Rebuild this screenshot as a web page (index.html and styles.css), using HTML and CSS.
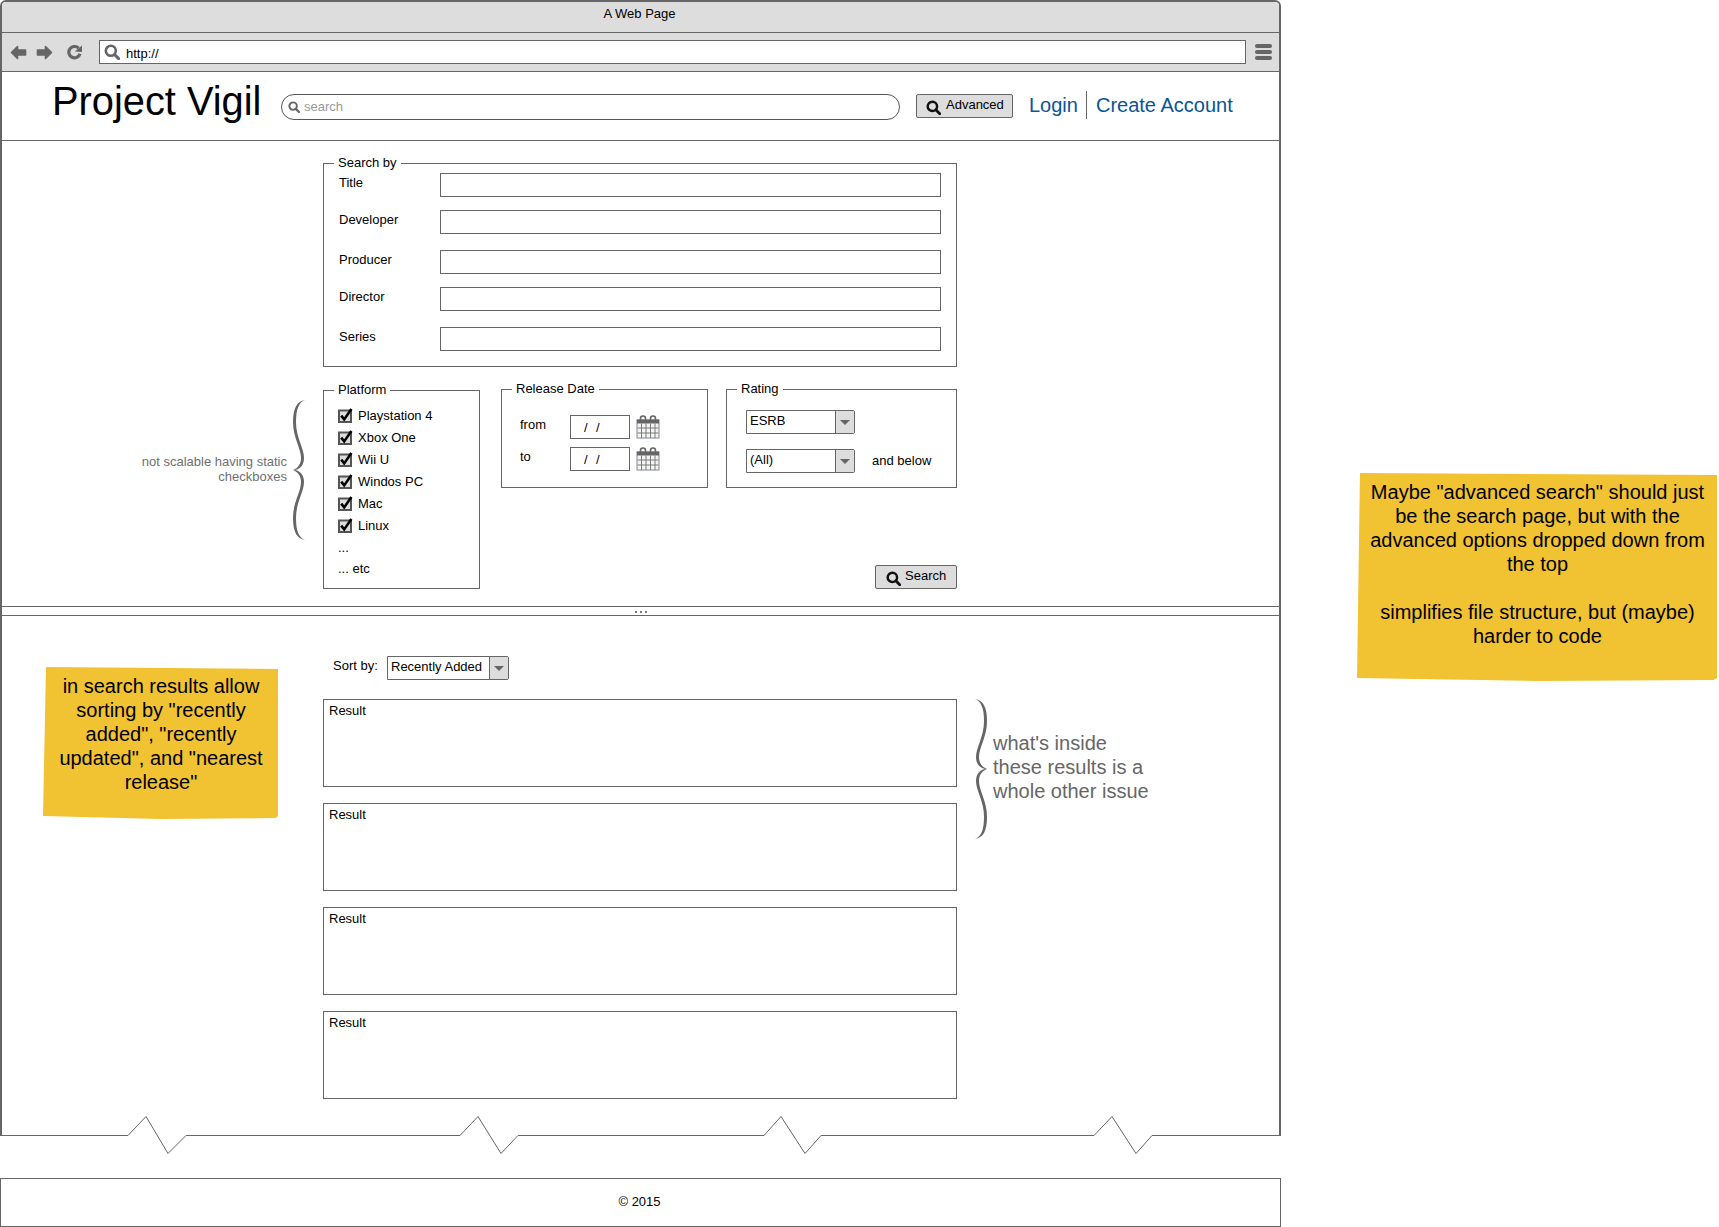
FILE: index.html
```html
<!DOCTYPE html>
<html lang="en">
<head>
    <meta charset="UTF-8">
    <meta name="viewport" content="width=device-width, initial-scale=1.0">
    <title>Project Vigil - Advanced Search</title>
    <link rel="stylesheet" href="styles.css">
</head>
<body>
    <svg class="icon-defs" width="0" height="0">
        <symbol id="icon-search" viewBox="0 0 16 16">
            <circle cx="6.8" cy="6.8" r="5" fill="none" stroke="currentColor" stroke-width="2.6"/>
            <path d="M10.5 10.5 L14.6 14.6" fill="none" stroke="currentColor" stroke-width="3" stroke-linecap="round"/>
        </symbol>
        <symbol id="icon-calendar" viewBox="0 0 24 24">
            <rect x="1" y="5" width="22" height="18" fill="#f4f4f4" stroke="#7f8794" stroke-width="1"/>
            <path d="M1 4.5 H23 V8.5 H1 Z" fill="#666"/>
            <path d="M4.5 6 V3.5 A2.5 2.5 0 0 1 9.5 3.5 V6 M14.5 6 V3.5 A2.5 2.5 0 0 1 19.5 3.5 V6" fill="none" stroke="#666" stroke-width="1.6"/>
            <path d="M1.5 13 H22.5 M1.5 18 H22.5 M5.5 8.5 V23 M10 8.5 V23 M14.5 8.5 V23 M19 8.5 V23" stroke="#7a7a7a" stroke-width="1"/>
        </symbol>
        <symbol id="icon-check" viewBox="0 0 15 15">
            <rect x="1" y="2.5" width="12" height="11.5" fill="#ddd" stroke="#555" stroke-width="2"/>
            <path d="M3.2 7.6 L6.2 11.4 L13.4 1" fill="none" stroke="#000" stroke-width="2.6"/>
        </symbol>
        <symbol id="icon-brace" viewBox="0 0 14 140">
            <path d="M13 0 C5 1 1 8 1 22 C1 38 9 48 9 58 C9 64 6 68 1 70 C6 72 9 76 9 82 C9 92 1 102 1 118 C1 132 5 139 13 140 C7 138 4 131 4 118 C4 102 12 92 12 82 C12 76 9 71 3 70 C9 69 12 64 12 58 C12 48 4 38 4 22 C4 9 7 2 13 0 Z" fill="#666"/>
        </symbol>
    </svg>

    <div class="stage">
        <div class="browser">
            <div class="titlebar">A Web Page</div>

            <div class="toolbar">
                <svg class="nav-icon" viewBox="0 0 17 15"><path d="M7.5 1.5 L1.5 7.5 L7.5 13.5 V10 H15.5 V5 H7.5 Z" fill="#666" stroke="#666" stroke-width="1.6" stroke-linejoin="round"/></svg>
                <svg class="nav-icon nav-forward" viewBox="0 0 17 15"><path d="M9.5 1.5 L15.5 7.5 L9.5 13.5 V10 H1.5 V5 H9.5 Z" fill="#666" stroke="#666" stroke-width="1.6" stroke-linejoin="round"/></svg>
                <svg class="nav-icon nav-reload" viewBox="0 0 17 15"><path d="M12.6 3.2 A5.7 5.7 0 1 0 14 8.8" fill="none" stroke="#666" stroke-width="3.2"/><path d="M8.8 6.6 L16 7 V0.4 Z" fill="#666"/></svg>
                <div class="url-bar">
                    <svg class="url-icon"><use href="#icon-search"/></svg>
                    <span>http://</span>
                </div>
                <div class="menu-icon"><i></i><i></i><i></i></div>
            </div>

            <header class="site-header">
                <h1 class="logo">Project Vigil</h1>
                <div class="site-search">
                    <svg class="site-search-icon"><use href="#icon-search"/></svg>
                    <span>search</span>
                </div>
                <button class="btn btn-advanced"><svg class="btn-icon"><use href="#icon-search"/></svg><span>Advanced</span></button>
                <nav class="account-links">
                    <a href="#">Login</a>
                    <a href="#">Create Account</a>
                </nav>
            </header>

            <section class="search-panel">
                <fieldset class="group search-by">
                    <legend>Search by</legend>
                    <div class="form-row"><label>Title</label><input type="text"></div>
                    <div class="form-row"><label>Developer</label><input type="text"></div>
                    <div class="form-row"><label>Producer</label><input type="text"></div>
                    <div class="form-row"><label>Director</label><input type="text"></div>
                    <div class="form-row"><label>Series</label><input type="text"></div>
                </fieldset>

                <div class="filters">
                    <fieldset class="group platform">
                        <legend>Platform</legend>
                        <div class="check-row"><svg class="check"><use href="#icon-check"/></svg>Playstation 4</div>
                        <div class="check-row"><svg class="check"><use href="#icon-check"/></svg>Xbox One</div>
                        <div class="check-row"><svg class="check"><use href="#icon-check"/></svg>Wii U</div>
                        <div class="check-row"><svg class="check"><use href="#icon-check"/></svg>Windos PC</div>
                        <div class="check-row"><svg class="check"><use href="#icon-check"/></svg>Mac</div>
                        <div class="check-row"><svg class="check"><use href="#icon-check"/></svg>Linux</div>
                        <div class="more-row">...</div>
                        <div class="more-row">... etc</div>
                    </fieldset>

                    <div class="filters-side">
                        <div class="filters-top">
                            <fieldset class="group release-date">
                                <legend>Release Date</legend>
                                <div class="date-row">
                                    <label>from</label>
                                    <input class="date-input" type="text" value="/  /">
                                    <svg class="calendar"><use href="#icon-calendar"/></svg>
                                </div>
                                <div class="date-row">
                                    <label>to</label>
                                    <input class="date-input" type="text" value="/  /">
                                    <svg class="calendar"><use href="#icon-calendar"/></svg>
                                </div>
                            </fieldset>

                            <fieldset class="group rating">
                                <legend>Rating</legend>
                                <div class="rating-row">
                                    <div class="select rating-select"><span>ESRB</span><b class="select-arrow"></b></div>
                                </div>
                                <div class="rating-row">
                                    <div class="select rating-select"><span>(All)</span><b class="select-arrow"></b></div>
                                    <span class="rating-below">and below</span>
                                </div>
                            </fieldset>
                        </div>
                        <button class="btn btn-search"><svg class="btn-icon"><use href="#icon-search"/></svg><span>Search</span></button>
                    </div>
                </div>
            </section>

            <div class="splitter"><i></i><i></i><i></i></div>

            <section class="results-panel">
                <div class="sort-row">
                    <label>Sort by:</label>
                    <div class="select sort-select"><span>Recently Added</span><b class="select-arrow"></b></div>
                </div>
                <div class="result">Result</div>
                <div class="result">Result</div>
                <div class="result">Result</div>
                <div class="result">Result</div>
            </section>

            <!-- torn bottom edge of the window -->
            <svg class="torn-edge" viewBox="0 0 1281 40">
                <path d="M0 20.5 H128 L146 1.5 L168 38.5 L186 20.5 H460 L478 1.5 L501 38.5 L518 20.5 H764 L781 1.5 L805 38.5 L821 20.5 H1094 L1112 1.5 L1136 38.5 L1152 20.5 H1281" fill="none" stroke="#666"/>
            </svg>
        </div>

        <footer class="page-footer">© 2015</footer>

        <!-- annotations on the mockup -->
        <div class="remark remark-checkboxes">not scalable having static<br>checkboxes</div>
        <svg class="brace brace-left"><use href="#icon-brace"/></svg>
        <svg class="brace brace-right"><use href="#icon-brace"/></svg>
        <div class="remark remark-results">what's inside<br>these results is a<br>whole other issue</div>

        <div class="sticky sticky-sort">in search results allow sorting by "recently added", "recently updated", and "nearest release"</div>
        <div class="sticky sticky-advanced">Maybe "advanced search" should just be the search page, but with the advanced options dropped down from the top<br><br>simplifies file structure, but (maybe) harder to code</div>
    </div>
</body>
</html>
```

FILE: styles.css
```css
* {
    box-sizing: border-box;
}
html, body {
    margin: 0;
    padding: 0;
    background: #fff;
}
body {
    font-family: "Liberation Sans", Arial, sans-serif;
    font-size: 13px;
    color: #000;
}
.icon-defs {
    position: absolute;
}
.stage {
    position: relative;
    width: 1719px;
    height: 1227px;
    overflow: hidden;
}

/* browser window */
.browser {
    position: relative;
    width: 1281px;
    height: 1136px;
    border: 2px solid #666;
    border-bottom: none;
    border-radius: 6px 6px 0 0;
}
.titlebar {
    height: 31px;
    padding-top: 4px;
    padding-right: 2px;
    background: #ddd;
    border-bottom: 1px solid #666;
    border-radius: 4px 4px 0 0;
    text-align: center;
    line-height: 15px;
}
.toolbar {
    display: flex;
    align-items: center;
    height: 39px;
    padding: 0 7px 0 8px;
    background: #ddd;
    border-bottom: 1px solid #666;
}
.nav-icon {
    flex: none;
    width: 17px;
    height: 15px;
}
.nav-forward {
    margin-left: 9px;
}
.nav-reload {
    margin-left: 13px;
}
.url-bar {
    flex: 1;
    display: flex;
    align-items: center;
    height: 24px;
    margin: 0 9px 0 16px;
    padding-left: 4px;
    background: #fff;
    border: 1px solid #666;
    line-height: 15px;
}
.url-bar span {
    margin-top: 2px;
}
.url-icon {
    width: 16px;
    height: 16px;
    margin-right: 6px;
    color: #666;
}
.menu-icon {
    display: flex;
    flex-direction: column;
    gap: 2px;
    width: 17px;
}
.menu-icon i {
    height: 4px;
    background: #666;
    border-radius: 2px;
}

/* site header */
.site-header {
    display: flex;
    align-items: center;
    height: 69px;
    padding-left: 50px;
    border-bottom: 1px solid #666;
}
.logo {
    width: 229px;
    margin: -10px 0 0;
    font-size: 39.8px;
    font-weight: normal;
    line-height: 46px;
    white-space: nowrap;
}
.site-search {
    display: flex;
    align-items: center;
    width: 619px;
    height: 26px;
    margin-top: 2px;
    padding: 0 0 1px 6px;
    color: #999;
    border: 1px solid #555;
    border-radius: 13px;
}
.site-search-icon {
    width: 12px;
    height: 12px;
    margin-right: 4px;
    color: #666;
}
.btn {
    display: flex;
    align-items: flex-start;
    padding: 0;
    font-family: inherit;
    font-size: 13px;
    color: #000;
    background: #ddd;
    border: 1px solid #666;
    border-radius: 2px;
}
.btn-icon {
    width: 15px;
    height: 15px;
    margin-top: 5px;
    color: #111;
}
.btn-advanced {
    width: 97px;
    height: 24px;
    margin-left: 16px;
    padding-left: 9px;
}
.btn-advanced span {
    margin: 2px 0 0 5px;
}
.account-links {
    display: flex;
    align-items: center;
    height: 28px;
    margin: -2px 0 0 16px;
}
.account-links a {
    font-size: 20px;
    line-height: 28px;
    color: #0a5596;
    text-decoration: none;
}
.account-links a + a {
    margin-left: 8px;
    padding-left: 9px;
    border-left: 1px solid #666;
}

/* search form */
.search-panel {
    height: 465px;
    padding: 14px 0 0 321px;
}
.group {
    min-width: 0;
    margin: 0;
    padding: 0 0 0 10px;
    border: 1px solid #666;
}
.group legend {
    padding: 0 4px 2px;
    line-height: 15px;
}
.search-by {
    width: 634px;
    padding-top: 1px;
    padding-bottom: 15px;
}
.form-row {
    display: flex;
    align-items: center;
    height: 24px;
    margin-left: 5px;
}
.form-row:nth-child(3) { margin-top: 13px; }
.form-row:nth-child(4) { margin-top: 16px; }
.form-row:nth-child(5) { margin-top: 13px; }
.form-row:nth-child(6) { margin-top: 16px; }
.form-row label {
    width: 101px;
    padding-bottom: 5px;
}
.form-row input {
    width: 501px;
    height: 24px;
    border: 1px solid #666;
    background: #fff;
}
.filters {
    display: flex;
    margin-top: 14px;
}
.platform {
    flex: none;
    width: 157px;
    height: 207px;
    margin-top: 1px;
    padding-top: 5px;
}
.check-row {
    display: flex;
    align-items: center;
    height: 22px;
    margin-left: 4px;
    line-height: 15px;
}
.check {
    width: 15px;
    height: 15px;
    margin-right: 5px;
    margin-top: 1px;
}
.more-row {
    height: 21px;
    margin-left: 4px;
    line-height: 15px;
}
.check-row + .more-row {
    margin-top: 4px;
}
.filters-side {
    display: flex;
    flex-direction: column;
    align-items: flex-end;
    width: 456px;
    margin-left: 21px;
}
.filters-top {
    display: flex;
    justify-content: space-between;
    width: 100%;
}
.release-date {
    width: 207px;
    height: 107px;
    padding-top: 17px;
}
.date-row {
    display: flex;
    align-items: center;
    height: 24px;
    margin-left: 8px;
}
.date-row + .date-row {
    margin-top: 8px;
}
.date-row label {
    width: 50px;
    padding-bottom: 6px;
}
.date-input {
    width: 60px;
    height: 24px;
    padding: 0 0 0 13px;
    font-family: inherit;
    font-size: 13px;
    letter-spacing: 0.4px;
    border: 1px solid #666;
}
.calendar {
    width: 24px;
    height: 24px;
    margin-left: 6px;
}
.rating {
    width: 231px;
    height: 107px;
    padding-top: 12px;
}
.rating-row {
    display: flex;
    align-items: center;
    margin-left: 9px;
}
.rating-row + .rating-row {
    margin-top: 15px;
}
.rating-below {
    margin: -2px 0 0 17px;
}
.select {
    display: flex;
    height: 24px;
    line-height: 20px;
    background: #fff;
    border: 1px solid #666;
    border-radius: 0 2px 2px 0;
}
.select span {
    flex: 1;
    padding-left: 3px;
}
.select-arrow {
    position: relative;
    flex: none;
    width: 19px;
    background: #ddd;
    border-left: 1px solid #666;
}
.select-arrow::after {
    content: "";
    position: absolute;
    left: 4px;
    top: 9px;
    border-style: solid;
    border-width: 5px 5px 0;
    border-color: #666 transparent transparent;
}
.rating-select {
    width: 109px;
}
.btn-search {
    width: 82px;
    height: 24px;
    margin-top: 77px;
    padding-left: 10px;
}
.btn-search span {
    margin: 2px 0 0 4px;
}

/* splitter */
.splitter {
    display: flex;
    justify-content: center;
    gap: 3px;
    height: 10px;
    padding: 4px 0 0 0;
    border-top: 1px solid #666;
    border-bottom: 1px solid #666;
}
.splitter i {
    width: 2px;
    height: 2px;
    background: #777;
}

/* results */
.results-panel {
    padding: 40px 0 0 321px;
}
.sort-row {
    display: flex;
    align-items: center;
    height: 24px;
    margin-bottom: 19px;
}
.sort-row label {
    width: 64px;
    padding: 0 0 5px 10px;
}
.sort-select {
    width: 122px;
}
.result {
    width: 634px;
    height: 88px;
    margin-bottom: 16px;
    padding: 3px 5px;
    line-height: 15px;
    border: 1px solid #666;
}
.torn-edge {
    position: absolute;
    left: -2px;
    top: 1113px;
    width: 1281px;
    height: 40px;
}

/* footer */
.page-footer {
    width: 1281px;
    height: 49px;
    margin-top: 42px;
    padding-top: 15px;
    padding-right: 2px;
    line-height: 15px;
    text-align: center;
    border: 1px solid #666;
}

/* annotations */
.remark {
    position: absolute;
    color: #707070;
}
.remark-checkboxes {
    right: 1432px;
    top: 454px;
    line-height: 15px;
    text-align: right;
}
.remark-results {
    left: 993px;
    top: 731px;
    font-size: 20px;
    line-height: 24px;
    color: #666;
}
.brace {
    position: absolute;
    width: 14px;
    height: 140px;
}
.brace-left {
    left: 292px;
    top: 400px;
}
.brace-right {
    left: 974px;
    top: 699px;
    transform: scaleX(-1);
}
.sticky {
    position: absolute;
    font-size: 20px;
    line-height: 24px;
    text-align: center;
    background: #f1c232;
    clip-path: polygon(3px 0, 100% 2px, 100% calc(100% - 3px), 99% calc(100% - 1px), 50% 100%, 0 calc(100% - 3px));
}
.sticky-sort {
    left: 43px;
    top: 667px;
    width: 235px;
    height: 152px;
    padding: 7px 10px 0 11px;
}
.sticky-advanced {
    left: 1357px;
    top: 473px;
    width: 360px;
    height: 208px;
    padding: 7px 8px 0 9px;
}
```
